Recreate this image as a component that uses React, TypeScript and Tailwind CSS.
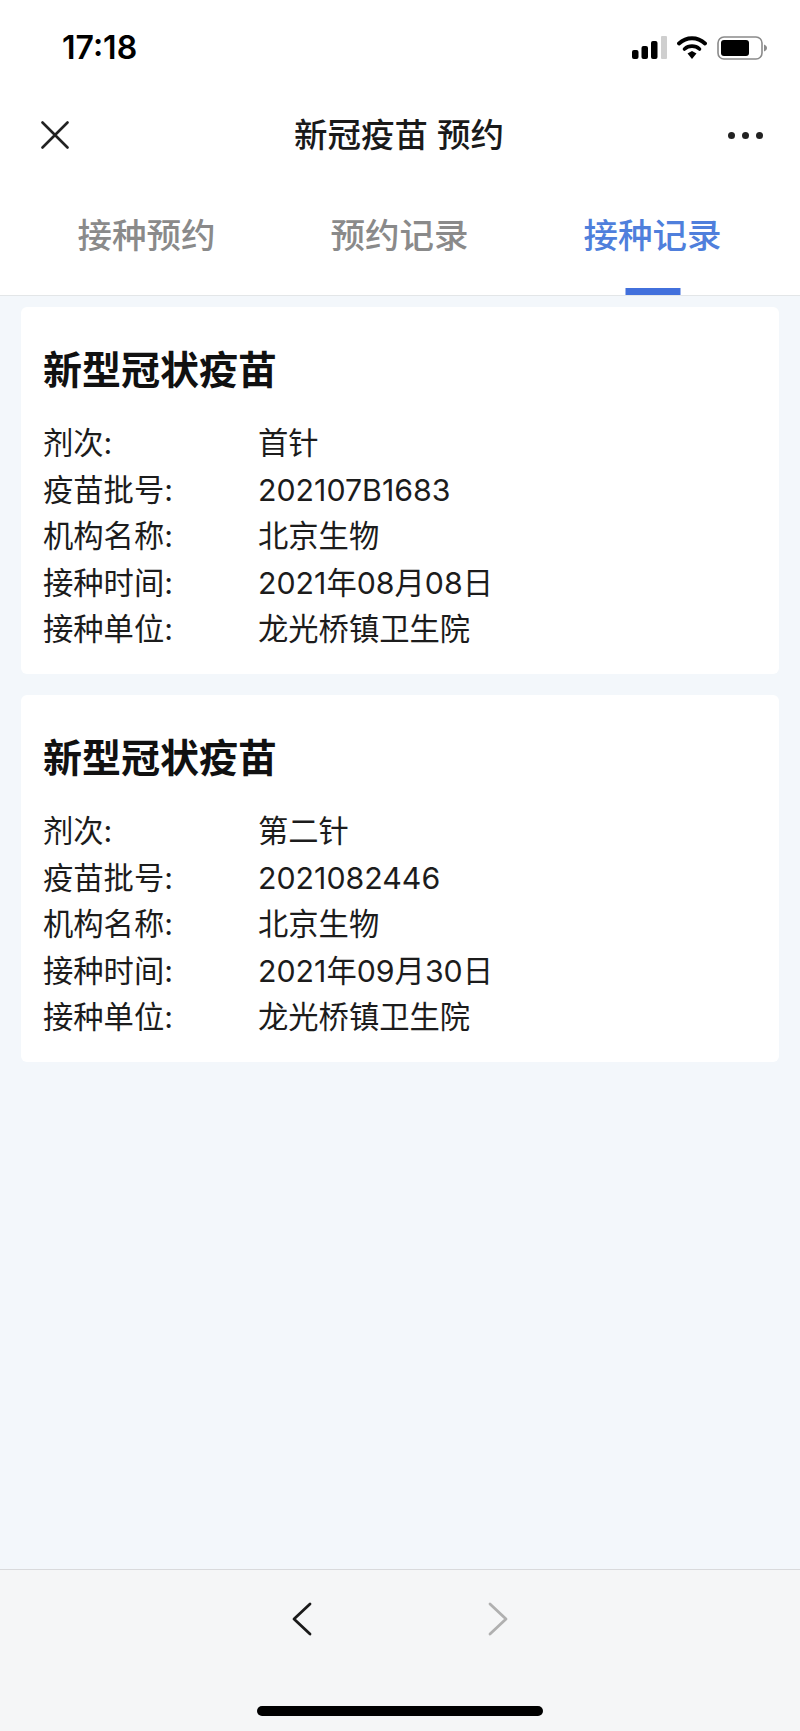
const font = "font-['Inter','Noto_Sans_CJK_SC',sans-serif]";

type Row = { label: string; value: string };

const records: Row[][] = [
    [
        { label: '剂次:', value: '首针' },
        { label: '疫苗批号:', value: '202107B1683' },
        { label: '机构名称:', value: '北京生物' },
        { label: '接种时间:', value: '2021年08月08日' },
        { label: '接种单位:', value: '龙光桥镇卫生院' },
    ],
    [
        { label: '剂次:', value: '第二针' },
        { label: '疫苗批号:', value: '2021082446' },
        { label: '机构名称:', value: '北京生物' },
        { label: '接种时间:', value: '2021年09月30日' },
        { label: '接种单位:', value: '龙光桥镇卫生院' },
    ],
];

const StatusIcons = () => (
    <div className="flex items-center gap-[10px]">
        <svg width="35" height="23" viewBox="0 0 35 23">
            <rect x="0" y="14" width="6.5" height="9" rx="2" fill="#000" />
            <rect x="9.5" y="10" width="6.5" height="13" rx="2" fill="#000" />
            <rect x="19" y="5" width="6.5" height="18" rx="2" fill="#000" />
            <rect x="29" y="0" width="6" height="23" rx="1" fill="#cfcfcf" />
        </svg>
        <svg width="30" height="23" viewBox="0 0 30 23">
            <path d="M2 7.5C9.5 0.5 20.5 0.5 28 7.5" fill="none" stroke="#000" strokeWidth="3.8" strokeLinecap="round" />
            <path d="M7.5 13C11.8 9.2 18.2 9.2 22.5 13" fill="none" stroke="#000" strokeWidth="3.6" strokeLinecap="round" />
            <path d="M10.5 17.4L15 15L19.5 17.4L15 23Z" fill="#000" />
        </svg>
        <svg width="50" height="24" viewBox="0 0 50 24">
            <rect x="1" y="1" width="44" height="22" rx="6" fill="none" stroke="#8a8a8a" strokeWidth="1.6" />
            <rect x="4" y="4" width="28" height="16" rx="3" fill="#000" />
            <path d="M47 8.5C49 9.5 50 10.5 50 12C50 13.5 49 14.5 47 15.5Z" fill="#8a8a8a" />
        </svg>
    </div>
);

const RecordCard = ({ rows }: { rows: Row[] }) => (
    <div className="bg-white rounded-md pl-[22px] pr-4 pt-[39px] pb-[21px]">
        <h2 className="text-[39px] leading-[48px] font-bold text-[#111]">新型冠状疫苗</h2>
        <div className="mt-[27px]">
            {rows.map((row) => (
                <div key={row.label} className="flex h-[46.4px] items-center text-[30.3px] text-[#1c1c1c]">
                    <span className="w-[215px] shrink-0">{row.label}</span>
                    <span>{row.value}</span>
                </div>
            ))}
        </div>
    </div>
);

const App = () => {
    return (
        <div className={`${font} w-[800px] h-[1731px] flex flex-col bg-[#f3f7fb] overflow-hidden`}>
            <div className="bg-white h-[296px] shrink-0 border-b border-[#e3e6e8]">
                <div className="flex items-center justify-between h-[95px] pl-[62px] pr-[33px]">
                    <span className="font-semibold text-[32px] text-black">17:18</span>
                    <StatusIcons />
                </div>
                <div className="relative flex items-center justify-between h-[80px] pl-[41px] pr-[37px]">
                    <svg width="28" height="28" viewBox="0 0 28 28" className="text-[#222]">
                        <path d="M1.5 1.5L26.5 26.5M26.5 1.5L1.5 26.5" fill="none" stroke="currentColor" strokeWidth="2.6" strokeLinecap="round" />
                    </svg>
                    <span className="absolute left-0 right-[2px] text-center text-[33.5px] font-medium text-[#1a1a1a]">新冠疫苗 预约</span>
                    <div className="flex gap-[7px]">
                        <span className="w-[7px] h-[7px] rounded-full bg-[#222]" />
                        <span className="w-[7px] h-[7px] rounded-full bg-[#222]" />
                        <span className="w-[7px] h-[7px] rounded-full bg-[#222]" />
                    </div>
                </div>
                <div className="grid grid-cols-3 pl-[20px] pr-[21px] h-[120px] text-[34.5px] font-medium">
                    <div className="flex justify-center pt-[35px] text-[#8a8a8a]">接种预约</div>
                    <div className="flex justify-center pt-[35px] text-[#8a8a8a]">预约记录</div>
                    <div className="relative flex justify-center pt-[35px] text-[#4f7fdc]">
                        接种记录
                        <span className="absolute bottom-0 left-1/2 -translate-x-1/2 w-[55px] h-[7px] bg-[#4270dc]" />
                    </div>
                </div>
            </div>

            <div className="flex-1 flex flex-col gap-[21px] px-[21px] pt-[11px]">
                {records.map((rows, i) => (
                    <RecordCard key={i} rows={rows} />
                ))}
            </div>

            <div className="h-[162px] shrink-0 bg-[#f5f6f7] border-t border-[#d9dadc] flex flex-col items-center">
                <div className="flex items-center justify-center gap-[176px] h-[97px]">
                    <svg width="20" height="34" viewBox="0 0 20 34" className="text-[#1a1a1a]">
                        <path d="M18 2L2 17L18 32" fill="none" stroke="currentColor" strokeWidth="2.8" strokeLinecap="round" strokeLinejoin="round" />
                    </svg>
                    <svg width="20" height="34" viewBox="0 0 20 34" className="text-[#b0b0b0]">
                        <path d="M2 2L18 17L2 32" fill="none" stroke="currentColor" strokeWidth="2.8" strokeLinecap="round" strokeLinejoin="round" />
                    </svg>
                </div>
                <div className="mt-[39px] w-[286px] h-[10px] rounded-full bg-black" />
            </div>
        </div>
    );
};

export default App;
